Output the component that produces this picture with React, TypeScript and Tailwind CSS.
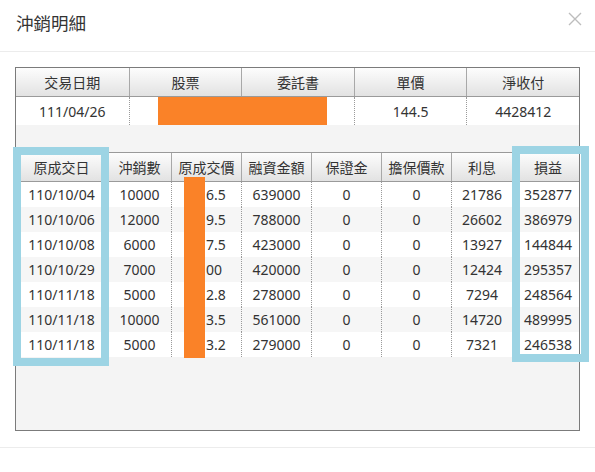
const topHeaders = ['交易日期', '股票', '委託書', '單價', '淨收付']
const topRow = ['111/04/26', '', '', '144.5', '4428412']

const headers = ['原成交日', '沖銷數', '原成交價', '融資金額', '保證金', '擔保價款', '利息', '損益']

const rows = [
  ['110/10/04', '10000', '6.5', '639000', '0', '0', '21786', '352877'],
  ['110/10/06', '12000', '9.5', '788000', '0', '0', '26602', '386979'],
  ['110/10/08', '6000', '7.5', '423000', '0', '0', '13927', '144844'],
  ['110/10/29', '7000', '00', '420000', '0', '0', '12424', '295357'],
  ['110/11/18', '5000', '2.8', '278000', '0', '0', '7294', '248564'],
  ['110/11/18', '10000', '3.5', '561000', '0', '0', '14720', '489995'],
  ['110/11/18', '5000', '3.2', '279000', '0', '0', '7321', '246538'],
]

const cols = 'grid grid-cols-[91px_64px_70px_70px_70px_70px_61px_71px]'
const headBg = 'bg-gradient-to-b from-[#fdfdfd] to-[#e2e2e2]'

export default function App() {
  return (
    <div
      className="relative w-[595px] h-[472px] overflow-hidden bg-white text-[#333]"
      style={{ fontFamily: '"Noto Sans", "Noto Sans CJK TC", sans-serif' }}
    >
      <header className="flex items-center justify-between h-[52px] border-b border-[#ececec] pl-[16px] pr-[13px]">
        <h1 className="text-[17.5px] leading-none pb-[3px]">沖銷明細</h1>
        <svg width="14" height="14" viewBox="0 0 14 14" className="mb-[14px]" fill="none">
          <path d="M1 1L13 13M13 1L1 13" stroke="#bdbdbd" strokeWidth="1.4" />
        </svg>
      </header>

      <div className="px-[15px] pt-[15px] pb-[16px] border-b border-[#ececec]">
        <div className="h-[364px] border border-[#7b7b7b] bg-[#f4f4f4]">
          {/* summary */}
          <div className={`grid grid-cols-5 h-[29px] border-b border-[#9a9a9a] ${headBg}`}>
            {topHeaders.map((h, i) => (
              <div
                key={h}
                className={`flex items-center justify-center text-[14px] ${i > 0 ? 'border-l border-[#a8a8a8]' : ''}`}
              >
                {h}
              </div>
            ))}
          </div>
          <div className="grid grid-cols-5 h-[28px] bg-white">
            {topRow.map((v, i) => (
              <div
                key={i}
                className={`flex items-center justify-center text-[14px] ${i > 0 ? 'border-l border-dotted border-[#9a9a9a]' : ''}`}
              >
                {v}
              </div>
            ))}
          </div>

          {/* details */}
          <div className={`${cols} mt-[27px] h-[30px] border-y border-[#9a9a9a] ${headBg}`}>
            {headers.map((h, i) => (
              <div
                key={h}
                className={`flex items-center justify-center text-[14px] ${i > 0 ? 'border-l border-[#a8a8a8]' : ''}`}
              >
                {h}
              </div>
            ))}
          </div>
          {rows.map((r, ri) => (
            <div key={ri} className={`${cols} h-[25px] ${ri % 2 ? 'bg-[#f6f6f6]' : 'bg-white'}`}>
              {r.map((v, i) => (
                <div
                  key={i}
                  className={`flex items-center justify-center text-[14px] ${
                    i === 2 ? 'justify-start pl-[34px]' : ''
                  } ${i > 0 ? 'border-l border-dotted border-[#9a9a9a]' : ''}`}
                >
                  {v}
                </div>
              ))}
            </div>
          ))}
        </div>
      </div>

      {/* redactions and highlights */}
      <div className="absolute left-[158px] top-[97px] w-[169px] h-[28px] bg-[#fa8228]" />
      <div className="absolute left-[184px] top-[177px] w-[21px] h-[181px] bg-[#fa8228]" />
      <div className="absolute left-[13px] top-[147px] w-[96px] h-[219px] border-[8px] border-[#9dd4e4]" />
      <div className="absolute left-[512px] top-[146px] w-[77px] h-[216px] border-[8px] border-[#9dd4e4]" />
    </div>
  )
}
